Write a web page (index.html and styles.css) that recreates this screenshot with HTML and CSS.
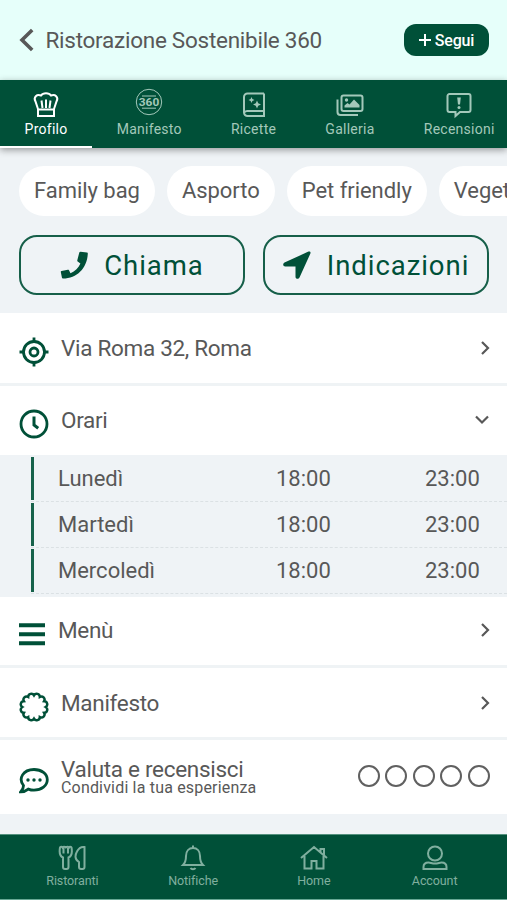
FILE: index.html
```html
<!DOCTYPE html>
<html lang="it">
<head>
<meta charset="utf-8">
<meta name="viewport" content="width=device-width, initial-scale=1">
<title>Ristorazione Sostenibile 360</title>
<link rel="stylesheet" href="styles.css">
</head>
<body>
<div class="app">
  <header class="header">
    <svg class="back" viewBox="0 0 16 24"><path d="M13.2 2 3 12l10.2 10"/></svg>
    <h1 class="title">Ristorazione Sostenibile 360</h1>
    <button class="follow"><svg class="plus" viewBox="0 0 12 12"><path d="M6 0v12M0 6h12"/></svg>Segui</button>
  </header>

  <nav class="tabs">
    <a class="tab active">
      <svg class="tab-icon" viewBox="0 0 28 28"><path d="M6 18 3.500 10.500C1 6 5 2.800 9 4.500c2-3 8-3 10 0 4-1.700 8 1.500 5.500 6L22 18M9.500 9.500l1 7.500M14 8.500V17M18.500 9.500l-1 7.500M6 18.500h16v6.500H6z"/></svg>
      <span>Profilo</span>
    </a>
    <a class="tab">
      <svg class="tab-icon" viewBox="0 0 28 28"><circle class="thin" cx="14" cy="11" r="12.700"/><path class="thin" d="M7 5h14M7 17.200h14"/><text class="logo-text" x="14" y="15" textLength="20.500" lengthAdjust="spacingAndGlyphs">360</text></svg>
      <span>Manifesto</span>
    </a>
    <a class="tab">
      <svg class="tab-icon" viewBox="0 0 28 28"><path d="M24 2.500H7.500A3.500 3.500 0 0 0 4 6v15.500A3.500 3.500 0 0 0 7.500 25H24v-5H7.500A3.500 3.500 0 0 0 4 22M24 2.500V20"/><path class="fill" d="m11.500 6 .9 2.100 2.100.9-2.100.9-.9 2.100-.9-2.100L8.500 9l2.100-.9zM17 9.500l1.200 2.800 2.800 1.200-2.800 1.200L17 17.500l-1.200-2.800-2.800-1.200 2.800-1.200z"/></svg>
      <span>Ricette</span>
    </a>
    <a class="tab">
      <svg class="tab-icon" viewBox="0 0 28 28"><rect x="5.500" y="4.500" width="21" height="15.500" rx="2"/><path d="M1.500 8.500V21a3 3 0 0 0 3 3H22"/><circle class="fill" cx="10.500" cy="9" r="1.700"/><path class="fill" d="M8.500 16.500v-2l3-2.500 2 1.500 4.500-5 5.500 5.500v2.500z"/></svg>
      <span>Galleria</span>
    </a>
    <a class="tab">
      <svg class="tab-icon" viewBox="0 0 28 28"><path d="M4.500 3h19a2 2 0 0 1 2 2v14a2 2 0 0 1-2 2H15l-4.500 4V21h-6a2 2 0 0 1-2-2V5a2 2 0 0 1 2-2z"/><path class="fill" d="M12.200 6.500h3.600L15 13.500h-2z"/><circle class="fill" cx="14" cy="16.500" r="1.500"/></svg>
      <span>Recensioni</span>
    </a>
  </nav>

  <main class="content">
    <div class="chips">
      <span class="chip">Family bag</span><span class="chip">Asporto</span><span class="chip">Pet friendly</span><span class="chip">Vegetariano</span>
    </div>
    <div class="actions">
      <button class="action call"><svg viewBox="0 0 28 28"><path d="M20.500.8 27 1.500c.6.100.8.4.8 1C27.300 17 17 27.500 3 27.500c-.7 0-1-.3-1.100-.9L.8 21c-.1-.6.2-1 .7-1.100l6.300-1.200c.5-.1.900 0 1.200.5l1.500 3c4.500-1.700 8.200-5.400 9.900-9.700l-2.700-2c-.4-.3-.5-.7-.4-1.200l2-7.800c.2-.5.6-.7 1.200-.7z"/></svg><span>Chiama</span></button>
      <button class="action directions"><svg viewBox="0 0 28 28"><path d="M25.500.6 1.500 11.500C-.6 12.600 0 15.500 2.300 15.500H12.500V25.700c0 2.300 2.900 2.900 4 .8L27.400 2.500C28 1 26.700 0 25.500.6z"/></svg><span>Indicazioni</span></button>
    </div>

    <section class="list">
      <div class="row address">
        <svg class="row-icon" viewBox="0 0 30 30"><circle cx="15" cy="15" r="10.500"/><circle cx="15" cy="15" r="4"/><path d="M15 .5v5M15 24.500v5M.5 15h5M24.500 15h5"/></svg>
        <span class="label">Via Roma 32, Roma</span>
        <svg class="chevron" viewBox="0 0 10 16"><path d="m2 2 6 6-6 6"/></svg>
      </div>
      <div class="row hours-head">
        <svg class="row-icon" viewBox="0 0 30 30"><circle cx="15" cy="15" r="13"/><path class="hands" d="M15 7.500V16l4.200 3.300"/></svg>
        <span class="label">Orari</span>
        <svg class="chevron down" viewBox="0 0 16 10"><path d="m2 1.500 6 6 6-6"/></svg>
      </div>
      <div class="hours">
        <div class="day"><span>Lunedì</span><span>18:00</span><span>23:00</span></div>
        <div class="day"><span>Martedì</span><span>18:00</span><span>23:00</span></div>
        <div class="day"><span>Mercoledì</span><span>18:00</span><span>23:00</span></div>
      </div>
      <div class="row menu">
        <svg class="row-icon bars" viewBox="0 0 27 30"><path d="M0 6.300h26M0 15.300h26M0 24.300h26"/></svg>
        <span class="label">Menù</span>
        <svg class="chevron" viewBox="0 0 10 16"><path d="m2 2 6 6-6 6"/></svg>
      </div>
      <div class="row manifesto">
        <svg class="row-icon seal" viewBox="0 0 30 30"><path d="M15 3.300A3.150 3.150 0 0 1 20.850 4.870A3.150 3.150 0 0 1 25.130 9.150A3.150 3.150 0 0 1 26.700 15A3.150 3.150 0 0 1 25.130 20.850A3.150 3.150 0 0 1 20.850 25.130A3.150 3.150 0 0 1 15 26.700A3.150 3.150 0 0 1 9.150 25.130A3.150 3.150 0 0 1 4.870 20.850A3.150 3.150 0 0 1 3.300 15A3.150 3.150 0 0 1 4.870 9.150A3.150 3.150 0 0 1 9.150 4.870A3.150 3.150 0 0 1 15 3.300Z"/></svg>
        <span class="label">Manifesto</span>
        <svg class="chevron" viewBox="0 0 10 16"><path d="m2 2 6 6-6 6"/></svg>
      </div>
      <div class="row review">
        <svg class="row-icon" viewBox="0 0 30 30"><path d="M4.500 20.500C-1 13.500 4 4.500 15 4.500c7.500 0 13.300 4.500 13.300 10.300S22.500 25.200 15 25.200c-2 0-4-.4-5.700-1.100C7 26 4.500 26.800 1.800 26.800 3.500 25 4.500 23 4.500 20.500z"/><circle class="dot" cx="9" cy="15" r="1.700"/><circle class="dot" cx="15" cy="15" r="1.700"/><circle class="dot" cx="21" cy="15" r="1.700"/></svg>
        <div class="review-text"><span class="label">Valuta e recensisci</span><small>Condividi la tua esperienza</small></div>
        <div class="rating"><i></i><i></i><i></i><i></i><i></i></div>
      </div>
    </section>
  </main>

  <nav class="bottom">
    <a><svg viewBox="0 0 28 28"><path d="M2 3.500C1 9 1.500 12 5 13.500V23a2 2 0 0 0 2 2h1.500a2 2 0 0 0 2-2v-9.500C14 12 14.500 9 13.500 3.500 13.300 2.500 11.500 2.500 11 3.500 10 2.500 9 2.500 7.800 3.500 6.500 2.500 5.500 2.500 4.500 3.500 4 2.500 2.200 2.500 2 3.500zM5.500 4v5.500M10 4v5.500M26.500 3v20a2 2 0 0 1-2 2H23a2 2 0 0 1-2-2v-5c-4.500-2.500-4-7-2-10.500C20.500 4.500 23 2.500 26.500 3z"/></svg><span>Ristoranti</span></a>
    <a><svg viewBox="0 0 28 28"><path d="M14 1.500V4M4 21c2.500-2.500 3-4.500 3-9 0-5 3-8 7-8s7 3 7 8c0 4.500.5 6.500 3 9zM11.500 24c1 1.500 4 1.500 5 0"/></svg><span>Notifiche</span></a>
    <a><svg viewBox="0 0 28 28"><path d="M1 14 14 3l13 11M4.500 12v12.500h7V17h5v7.500h7V12M20.500 8V5h3.500v6"/></svg><span>Home</span></a>
    <a><svg viewBox="0 0 28 28"><circle cx="14" cy="9.500" r="7"/><path d="M2.500 25v-2c0-3 2-4.500 5-4.500 2 0 3.500 1 6.500 1s4.500-1 6.500-1c3 0 5 1.500 5 4.500v2z"/></svg><span>Account</span></a>
  </nav>
</div>
</body>
</html>
```

FILE: styles.css
```css
* { box-sizing: border-box; }
body {
  margin: 0;
  font-family: Roboto, "Liberation Sans", sans-serif;
  color: #585858;
  background: #eff3f6;
}
svg { flex: none; fill: none; stroke: currentColor; stroke-width: 2; }
button { font: inherit; padding: 0; }
.app { display: flex; flex-direction: column; width: 100%; height: 900px; overflow: hidden; }

.header { display: flex; align-items: center; flex: none; height: 80px; padding: 0 18px 0 19px; background: #e6fffa; }
.back { width: 16px; height: 24px; margin-right: 10.5px; stroke-width: 3.6; }
.title { margin: 0; font-size: 22.5px; font-weight: 400; letter-spacing: -.26px; white-space: nowrap; }
.follow { display: flex; align-items: center; justify-content: center; gap: 4px; width: 85px; height: 32px; margin-left: auto; border: 0; border-radius: 12px; background: #005038; color: #fff; font-size: 16px; font-weight: 500; letter-spacing: -.2px; }
.plus { width: 12px; height: 12px; stroke-width: 2; }

.tabs { position: relative; display: flex; flex: none; height: 68px; background: #005038; color: #a3c8ba; box-shadow: 0 2px 7px rgba(0, 0, 0, .38); }
.tab { display: flex; flex: none; flex-direction: column; align-items: center; padding: 11px 24.6px 0; font-size: 14px; line-height: 18px; letter-spacing: .26px; }
.tab.active { height: 68px; color: #fff; border-bottom: 2px solid #fff; }
.tab-icon { width: 28px; height: 28px; margin-bottom: 1px; overflow: visible; }
.tab-icon .thin { stroke-width: 1; }
.fill { fill: currentColor; stroke: none; }
.logo-text { fill: currentColor; stroke: none; font-size: 11px; font-weight: 700; text-anchor: middle; letter-spacing: 0; }

.content { display: flex; flex: 1; flex-direction: column; }
.chips { display: flex; gap: 12px; padding: 18px 0 0 19px; overflow: hidden; }
.chip { flex: none; height: 50px; padding: 0 15px; border-radius: 25px; background: #fff; font-size: 22px; line-height: 50px; letter-spacing: -.04px; }
.actions { display: grid; grid-template-columns: 1fr 1fr; gap: 18px; padding: 19px 18px 18px 19px; }
.action { display: flex; align-items: center; justify-content: center; gap: 16px; height: 60px; border: 2px solid #165f49; border-radius: 18px; background: transparent; color: #005038; font-size: 27.5px; letter-spacing: .95px; }
.action svg { width: 28px; height: 28px; fill: currentColor; stroke: none; }

.list { background: #fff; }
.row { display: flex; align-items: center; height: 72px; padding: 0 17.5px 0 19px; border-bottom: 3px solid #eff3f5; }
.row-icon { width: 30px; height: 30px; margin: 7px 12px 0 0; color: #005038; stroke-width: 2.8; }
.hands { stroke-width: 3; }
.dot { fill: currentColor; stroke: none; }
.label { font-size: 22.5px; line-height: 26px; letter-spacing: -.3px; }
.chevron { width: 10px; height: 16px; margin-left: auto; stroke-width: 2.2; }
.chevron.down { width: 16px; height: 10px; }
.address { height: 73px; }
.hours-head { height: 69px; padding-bottom: 2px; border: 0; }
.hours-head .row-icon { margin-top: 8px; }
.menu { height: 71px; padding-bottom: 2px; }
.menu .row-icon { margin-top: 8px; }
.bars { width: 27px; stroke-width: 4; }
.seal { margin-top: 8px; stroke-width: 2.5; }

.hours { height: 142px; padding: 1px 0 0 31px; background: #eff3f6; }
.day { display: grid; grid-template-columns: 218px 149px 1fr; align-items: center; height: 46px; padding-left: 27px; border-bottom: 1px dashed #dbe1e4; background: linear-gradient(#16624b, #16624b) 0 1px / 3px calc(100% - 2px) no-repeat; font-size: 22px; }
.review { height: 74px; padding-bottom: 2px; border: 0; }
.review .row-icon { margin-top: 8px; }
.review-text { display: flex; flex-direction: column; margin-top: -2px; }
.review small { font-size: 16px; line-height: 12px; letter-spacing: .18px; }
.rating { display: flex; gap: 5.4px; margin-left: auto; }
.rating i { width: 22px; height: 22px; border: 2px solid #606060; border-radius: 50%; }

.bottom { display: flex; flex: none; height: 66px; padding: 0 12px; border-top: 1px solid #55917e; border-bottom: 1px solid #68a995; background: #005038; color: #80af9f; }
.bottom a { display: flex; flex: 1; flex-direction: column; align-items: center; padding-top: 9px; font-size: 12.5px; line-height: 16px; letter-spacing: -.1px; }
.bottom svg { width: 28px; height: 28px; margin-bottom: 1px; }
```
